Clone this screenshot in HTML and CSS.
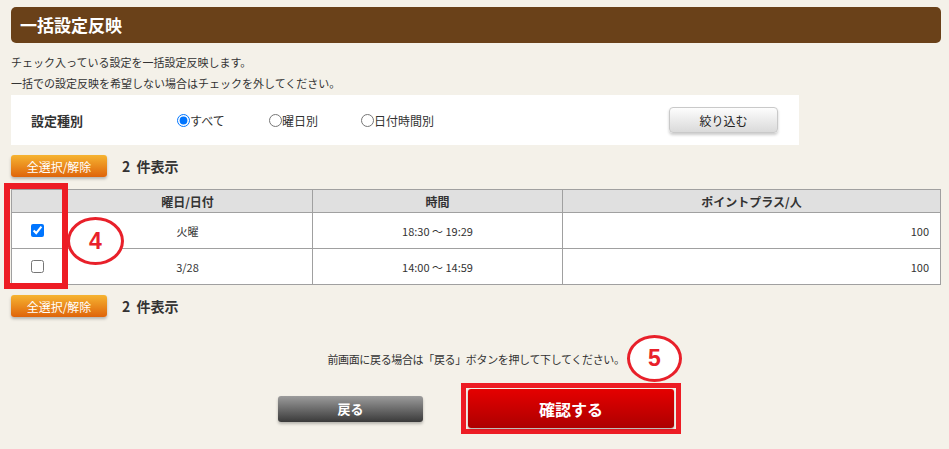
FILE: index.html
```html
<!DOCTYPE html>
<html lang="ja">
<head>
    <meta charset="UTF-8">
    <title>一括設定反映</title>
    <link rel="stylesheet" href="styles.css">
</head>
<body>
    <div class="wrap">
        <h1 class="title">一括設定反映</h1>

        <div class="intro">
            <p>チェック入っている設定を一括設定反映します。</p>
            <p>一括での設定反映を希望しない場合はチェックを外してください。</p>
        </div>

        <div class="filter">
            <span class="filter-label">設定種別</span>
            <label class="radio"><input type="radio" name="kind" checked>すべて</label>
            <label class="radio"><input type="radio" name="kind">曜日別</label>
            <label class="radio"><input type="radio" name="kind">日付時間別</label>
            <button class="btn-filter">絞り込む</button>
        </div>

        <div class="bar">
            <button class="btn-all">全選択/解除</button>
            <span class="count">2 件表示</span>
        </div>

        <div class="table-box">
            <table class="list">
                <thead>
                    <tr>
                        <th class="col-check"></th>
                        <th class="col-day">曜日/日付</th>
                        <th class="col-time">時間</th>
                        <th>ポイントプラス/人</th>
                    </tr>
                </thead>
                <tbody>
                    <tr>
                        <td class="center"><input type="checkbox" checked></td>
                        <td class="center">火曜</td>
                        <td class="center">18:30 ～ 19:29</td>
                        <td class="right">100</td>
                    </tr>
                    <tr>
                        <td class="center"><input type="checkbox"></td>
                        <td class="center">3/28</td>
                        <td class="center">14:00 ～ 14:59</td>
                        <td class="right">100</td>
                    </tr>
                </tbody>
            </table>
            <div class="mark-box mark-check"></div>
            <div class="mark-num mark-4">4</div>
        </div>

        <div class="bar">
            <button class="btn-all">全選択/解除</button>
            <span class="count">2 件表示</span>
        </div>

        <div class="note">
            前画面に戻る場合は「戻る」ボタンを押して下してください。
            <div class="mark-num mark-5">5</div>
        </div>

        <div class="actions">
            <button class="btn-back">戻る</button>
            <div class="confirm-wrap">
                <button class="btn-confirm">確認する</button>
            </div>
        </div>
    </div>
</body>
</html>
```

FILE: styles.css
```css
* {
    margin: 0;
    padding: 0;
    box-sizing: border-box;
}

body {
    font-family: "Noto Sans CJK JP", "Liberation Sans", sans-serif;
    font-size: 11px;
    color: #333;
    background: #f4f1e9;
}

.wrap {
    width: 930px;
    margin-left: 11px;
    padding-top: 7px;
}

.title {
    height: 36px;
    line-height: 36px;
    padding-left: 9px;
    background: #6a4119;
    color: #fff;
    font-size: 17px;
    font-weight: bold;
    border-radius: 5px;
}

.intro {
    margin-top: 9px;
}

.intro p {
    line-height: 21px;
}

.filter {
    display: flex;
    align-items: center;
    width: 788px;
    height: 50px;
    margin-top: 1px;
    padding-left: 20px;
    background: #fff;
}

.filter-label {
    width: 146px;
    font-size: 13px;
    font-weight: bold;
}

.radio {
    display: flex;
    align-items: center;
    width: 92px;
    font-size: 12px;
}

.radio input {
    margin: 0;
    width: 13px;
    height: 13px;
}

.radio:nth-of-type(3) {
    width: auto;
}

.btn-filter {
    margin-left: auto;
    margin-right: 21px;
    width: 109px;
    height: 26px;
    font-family: inherit;
    font-size: 12px;
    color: #222;
    background: linear-gradient(#fdfdfd, #dadada);
    border: 1px solid #c9c9c9;
    border-radius: 4px;
    box-shadow: 0 2px 3px rgba(0, 0, 0, 0.2);
}

.bar {
    display: flex;
    align-items: center;
    gap: 15px;
    margin-top: 10px;
}

.btn-all {
    width: 96px;
    height: 22px;
    font-family: inherit;
    font-size: 12px;
    color: #fff;
    border: none;
    border-radius: 3px;
    background: linear-gradient(#f6b431, #df640a);
    box-shadow: 0 2px 3px rgba(0, 0, 0, 0.25);
}

.count {
    font-size: 14px;
    font-weight: bold;
    word-spacing: 3px;
}

.table-box {
    position: relative;
    margin-top: 12px;
}

.list {
    width: 930px;
    border-collapse: collapse;
    background: #fff;
    font-size: 11px;
}

.list th,
.list td {
    border: 1px solid #a0a0a0;
}

.list th {
    height: 23px;
    background: #e0e0e0;
    font-size: 12px;
    font-weight: bold;
}

.list td {
    height: 36px;
}

.col-check {
    width: 51px;
}

.col-day,
.col-time {
    width: 250px;
}

.center {
    text-align: center;
}

.right {
    text-align: right;
    padding-right: 11px;
}

.list input {
    display: block;
    margin: 0 auto;
    width: 13px;
    height: 13px;
}

.mark-box {
    position: absolute;
    border: 6px solid #ed1c24;
}

.mark-check {
    left: -7px;
    top: -6px;
    width: 64px;
    height: 106px;
}

.mark-num {
    position: absolute;
    display: flex;
    align-items: center;
    justify-content: center;
    border: 3px solid #e8202a;
    border-radius: 50%;
    background: #fff;
    color: #e8202a;
    font-family: "Liberation Sans", sans-serif;
    font-size: 23px;
    font-weight: bold;
    letter-spacing: 0;
}

.mark-4 {
    left: 56px;
    top: 28px;
    width: 57px;
    height: 48px;
}

.note {
    position: relative;
    margin-top: 32px;
    line-height: 20px;
    text-align: center;
    letter-spacing: -0.35px;
}

.mark-5 {
    left: 616px;
    top: -14px;
    width: 55px;
    height: 47px;
    line-height: 1;
}

.actions {
    display: flex;
    align-items: center;
    justify-content: center;
    gap: 38px;
    margin-top: 14px;
    padding-left: 7px;
}

.btn-back {
    width: 145px;
    height: 26px;
    font-family: inherit;
    font-size: 13px;
    font-weight: bold;
    color: #fff;
    border: none;
    border-radius: 3px;
    background: linear-gradient(#9c9c9c, #3a3a3a);
    box-shadow: 0 2px 3px rgba(0, 0, 0, 0.25);
}

.confirm-wrap {
    padding: 1px 2px;
    border: 5px solid #ed1c24;
}

.btn-confirm {
    display: block;
    width: 206px;
    height: 39px;
    font-family: inherit;
    font-size: 16px;
    font-weight: bold;
    color: #fff;
    border: none;
    border-radius: 3px;
    background: linear-gradient(#e50000, #ad0000);
    box-shadow: 0 1px 2px rgba(0, 0, 0, 0.3);
}
```
